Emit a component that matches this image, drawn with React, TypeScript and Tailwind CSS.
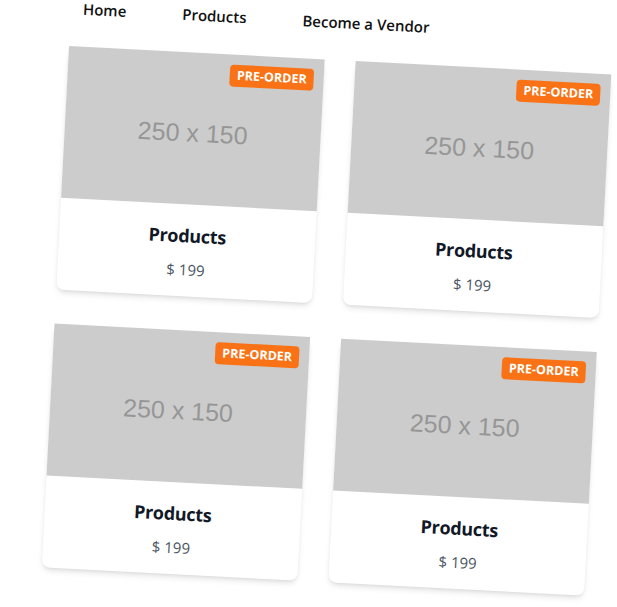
import React from 'react';

const products = [
  { id: 1, title: 'Products', price: 199 },
  { id: 2, title: 'Products', price: 199 },
  { id: 3, title: 'Products', price: 199 },
  { id: 4, title: 'Products', price: 199 },
];

const ProductCard: React.FC<{ title: string; price: number }> = ({ title, price }) => {
  return (
    <div className="relative w-[256px] bg-white rounded-lg shadow-md">
      <div className="h-[152px] bg-[#cccccc] flex items-center justify-center pt-2">
        <span className="text-[25px] leading-none text-[#969696] font-['Liberation_Sans',Arial,sans-serif]">
          250 x 150
        </span>
      </div>
      <span className="absolute top-2.5 right-2.5 bg-[#f97316] text-white text-[12.5px] font-bold leading-[22px] px-[7px] rounded">
        PRE-ORDER
      </span>
      <div className="h-[92px] pt-[17px] text-center">
        <h3 className="text-[18px] leading-7 font-bold tracking-[-0.3px] text-[#111827]">{title}</h3>
        <p className="mt-[10px] text-[15px] leading-5 text-[#4b5563]">$ {price}</p>
      </div>
    </div>
  );
};

export default function App() {
  return (
    <div className="w-full h-screen overflow-hidden bg-white font-['Open_Sans','Noto_Sans',sans-serif]">
      <div className="ml-[36px] w-[543px] rotate-3 origin-[93px_679px]">
        <nav className="flex gap-14 pl-3 h-6">
          <a className="text-[15px] leading-6 font-semibold text-[#111]">Home</a>
          <a className="text-[15px] leading-6 font-semibold text-[#111]">Products</a>
          <a className="text-[15px] leading-6 font-semibold text-[#111]">Become a Vendor</a>
        </nav>
        <div className="mt-[26px] grid grid-cols-[256px_256px] gap-x-[31px] gap-y-[34px]">
          {products.map((p) => (
            <ProductCard key={p.id} title={p.title} price={p.price} />
          ))}
        </div>
      </div>
    </div>
  );
}
